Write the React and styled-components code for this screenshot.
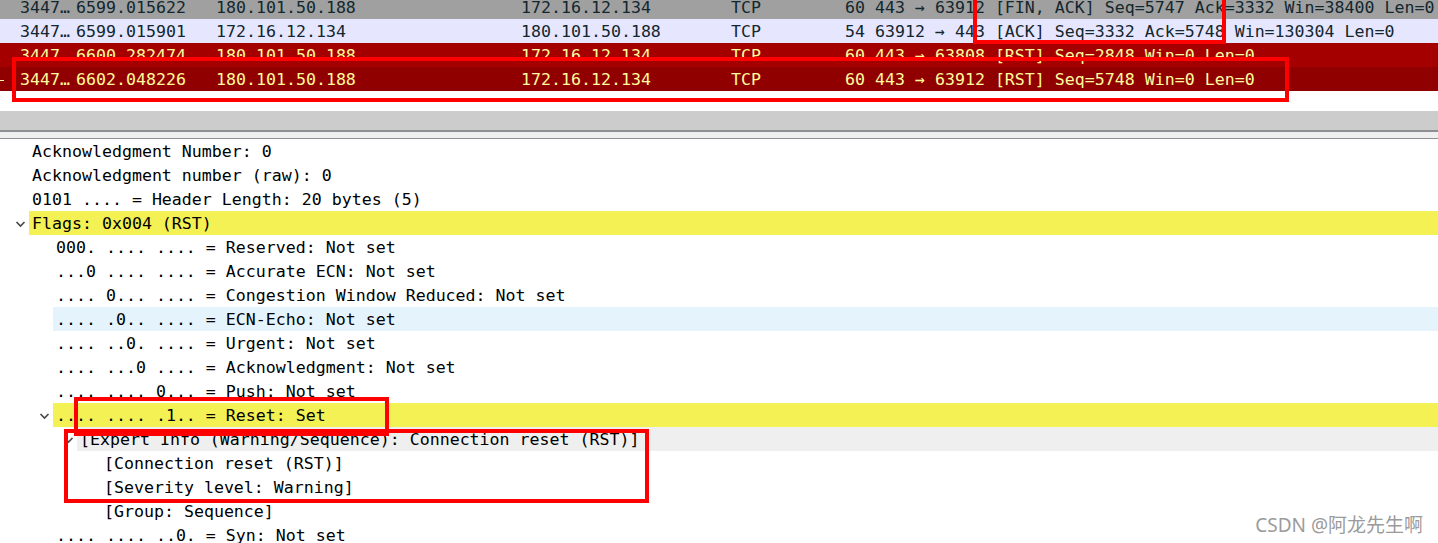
import styled, { createGlobalStyle, css } from "styled-components";

const GlobalStyle = createGlobalStyle`
  html, body {
    margin: 0;
    padding: 0;
    background: #ffffff;
    overflow: hidden;
  }
`;

const MONO = `"DejaVu Sans Mono", "Liberation Mono", monospace`;

const Page = styled.div`
  position: relative;
  width: 1438px;
  height: 543px;
  overflow: hidden;
  font-family: ${MONO};
  font-size: 16.6px;
  background: #fff;
`;

const PacketList = styled.div`
  margin-top: -5px;
  display: flex;
  flex-direction: column;
`;

const ROW_COLORS = {
  finAck: css`
    background: #a0a0a0;
    color: #12272e;
  `,
  ack: css`
    background: #e7e6ff;
    color: #12272e;
  `,
  rst: css`
    background: #a40000;
    color: #fffc9c;
  `,
  selected: css`
    background: #900000;
    color: #fffc9c;
  `,
};

const PacketRow = styled.div`
  display: grid;
  grid-template-columns: 20px 56px 140px 305px 210px 114px 30px 1fr;
  box-sizing: border-box;
  height: 24px;
  padding-top: 2px;
  line-height: 22px;
  white-space: pre;
  ${({ $kind }) => ROW_COLORS[$kind]}
`;

const Related = styled.span`
  align-self: center;
  width: 4px;
  height: 1px;
  background: ${({ $on }) => ($on ? "#fffc9c" : "transparent")};
`;

const Cell = styled.span`
  overflow: hidden;
`;

const Gap = styled.div`
  height: 20px;
`;

const Splitter = styled.div`
  height: 19px;
  background: #cccccc;
  border-bottom: 2px solid #8c8f94;
`;

const SplitterEdge = styled.div`
  height: 6px;
  background: #efefef;
  border-bottom: 1px solid #8c8f94;
`;

const Tree = styled.div`
  display: flex;
  flex-direction: column;
`;

const TreeRow = styled.div`
  display: flex;
  height: 24px;
  line-height: 24px;
  color: #000;
  white-space: pre;
`;

const Indent = styled.span`
  flex: 0 0 auto;
  width: ${({ $level }) => 11 + $level * 24}px;
`;

const Toggle = styled.span`
  flex: 0 0 18px;
  display: flex;
  align-items: center;
  justify-content: center;
  padding-top: 2px;
`;

const HIGHLIGHTS = {
  yellow: "#f4f154",
  blue: "#e5f3fd",
  gray: "#efefef",
};

const Label = styled.span`
  flex: 1;
  box-sizing: border-box;
  padding: 1px 0 0 3px;
  background: ${({ $hl }) => HIGHLIGHTS[$hl] || "transparent"};
`;

const Annotation = styled.div`
  position: absolute;
  box-sizing: border-box;
  border: 4px solid #ff0000;
  pointer-events: none;
`;

const Watermark = styled.div`
  position: absolute;
  right: 15px;
  bottom: 7px;
  font-family: "Noto Sans", "Noto Sans CJK SC", sans-serif;
  font-size: 19px;
  line-height: 22px;
  color: #9b9b9b;
  text-shadow: 0 0 1px #fff;
`;

const Chevron = () => (
  <svg width="11" height="8" viewBox="0 0 11 8">
    <polyline
      points="1.5,2 5.5,6 9.5,2"
      fill="none"
      stroke="#4a4a4a"
      strokeWidth="1.7"
    />
  </svg>
);

const packets = [
  {
    kind: "finAck",
    no: "3447…",
    time: "6599.015622",
    src: "180.101.50.188",
    dst: "172.16.12.134",
    len: "60",
    info: "443 → 63912 [FIN, ACK] Seq=5747 Ack=3332 Win=38400 Len=0",
  },
  {
    kind: "ack",
    no: "3447…",
    time: "6599.015901",
    src: "172.16.12.134",
    dst: "180.101.50.188",
    len: "54",
    info: "63912 → 443 [ACK] Seq=3332 Ack=5748 Win=130304 Len=0",
  },
  {
    kind: "rst",
    no: "3447…",
    time: "6600.282474",
    src: "180.101.50.188",
    dst: "172.16.12.134",
    len: "60",
    info: "443 → 63808 [RST] Seq=2848 Win=0 Len=0",
  },
  {
    kind: "selected",
    related: true,
    no: "3447…",
    time: "6602.048226",
    src: "180.101.50.188",
    dst: "172.16.12.134",
    len: "60",
    info: "443 → 63912 [RST] Seq=5748 Win=0 Len=0",
  },
];

const fields = [
  { level: 0, text: "Acknowledgment Number: 0" },
  { level: 0, text: "Acknowledgment number (raw): 0" },
  { level: 0, text: "0101 .... = Header Length: 20 bytes (5)" },
  { level: 0, text: "Flags: 0x004 (RST)", open: true, hl: "yellow" },
  { level: 1, text: "000. .... .... = Reserved: Not set" },
  { level: 1, text: "...0 .... .... = Accurate ECN: Not set" },
  { level: 1, text: ".... 0... .... = Congestion Window Reduced: Not set" },
  { level: 1, text: ".... .0.. .... = ECN-Echo: Not set", hl: "blue" },
  { level: 1, text: ".... ..0. .... = Urgent: Not set" },
  { level: 1, text: ".... ...0 .... = Acknowledgment: Not set" },
  { level: 1, text: ".... .... 0... = Push: Not set" },
  { level: 1, text: ".... .... .1.. = Reset: Set", open: true, hl: "yellow" },
  {
    level: 2,
    text: "[Expert Info (Warning/Sequence): Connection reset (RST)]",
    open: true,
    hl: "gray",
  },
  { level: 3, text: "[Connection reset (RST)]" },
  { level: 3, text: "[Severity level: Warning]" },
  { level: 3, text: "[Group: Sequence]" },
  { level: 1, text: ".... .... ..0. = Syn: Not set" },
];

export default function App() {
  return (
    <Page>
      <GlobalStyle />
      <PacketList>
        {packets.map((p, i) => (
          <PacketRow key={i} $kind={p.kind}>
            <Related $on={p.related} />
            <Cell>{p.no}</Cell>
            <Cell>{p.time}</Cell>
            <Cell>{p.src}</Cell>
            <Cell>{p.dst}</Cell>
            <Cell>TCP</Cell>
            <Cell>{p.len}</Cell>
            <Cell>{p.info}</Cell>
          </PacketRow>
        ))}
      </PacketList>
      <Gap />
      <Splitter />
      <SplitterEdge />
      <Tree>
        {fields.map((f, i) => (
          <TreeRow key={i}>
            <Indent $level={f.level} />
            <Toggle>{f.open && <Chevron />}</Toggle>
            <Label $hl={f.hl}>{f.text}</Label>
          </TreeRow>
        ))}
      </Tree>

      <Annotation style={{ left: 973, top: -10, width: 253, height: 54 }} />
      <Annotation style={{ left: 12, top: 57, width: 1277, height: 45 }} />
      <Annotation style={{ left: 74, top: 397, width: 315, height: 39 }} />
      <Annotation style={{ left: 64, top: 429, width: 585, height: 74 }} />

      <Watermark>CSDN @阿龙先生啊</Watermark>
    </Page>
  );
}
